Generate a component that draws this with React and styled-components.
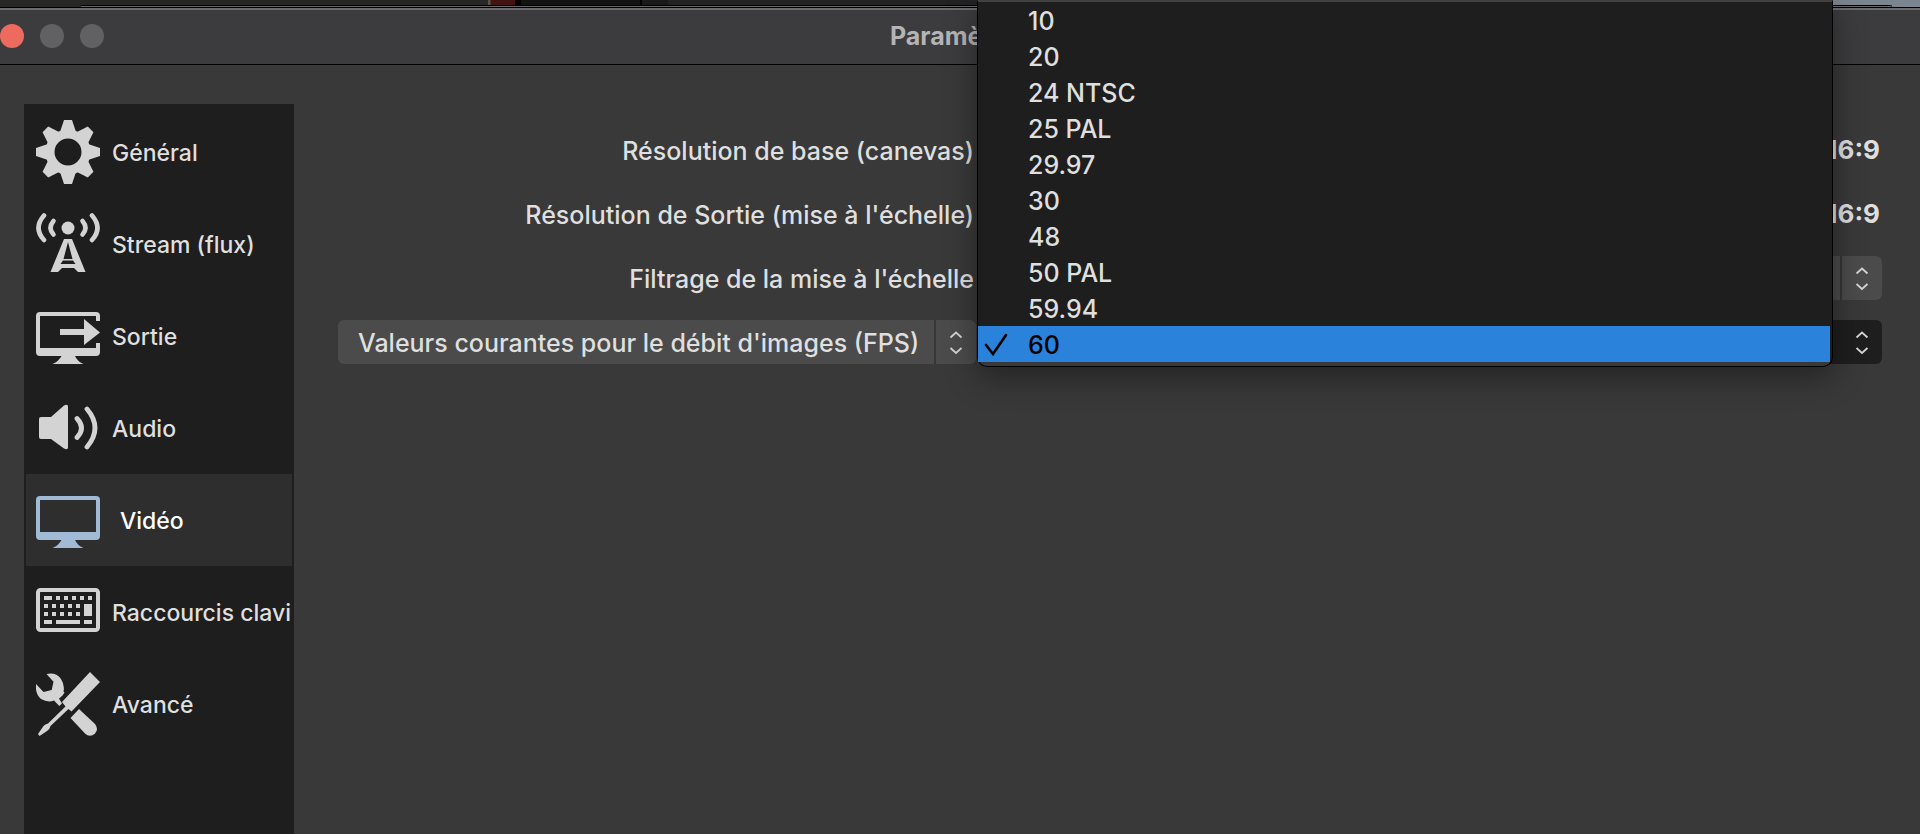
import React from 'react'
import styled, { createGlobalStyle } from 'styled-components'

const GlobalStyle = createGlobalStyle`
  * {
    box-sizing: border-box;
  }
  body {
    margin: 0;
    background: #393939;
    color: #dfdfdf;
    font-family: Inter, "Liberation Sans", sans-serif;
    font-size: 25px;
    font-weight: 500;
    line-height: 36px;
    overflow: hidden;
  }
`

const navItems = [
  { name: 'Général', icon: 'gear' },
  { name: 'Stream (flux)', icon: 'antenna' },
  { name: 'Sortie', icon: 'output' },
  { name: 'Audio', icon: 'audio' },
  { name: 'Vidéo', icon: 'video', active: true },
  { name: 'Raccourcis clavi', icon: 'keyboard' },
  { name: 'Avancé', icon: 'tools' },
]

const fpsValues = ['10', '20', '24 NTSC', '25 PAL', '29.97', '30', '48', '50 PAL', '59.94', '60']

// x, y, width of each small key
const keys = [
  [8, 8, 8], [20, 8, 4], [28, 8, 4], [36, 8, 4], [44, 8, 4], [52, 8, 4],
  [8, 16, 4], [16, 16, 4], [24, 16, 4], [32, 16, 4], [40, 16, 4],
  [8, 24, 4], [16, 24, 4], [24, 24, 4], [32, 24, 4], [40, 24, 4],
  [8, 32, 8], [20, 32, 24], [48, 32, 8],
]

const tooth = 'M28 0h8l4 12h-16z'

const icons = {
  gear: (
    <>
      <circle cx="32" cy="32" r="18" fill="none" stroke="currentColor" strokeWidth="9" />
      {[0, 45, 90, 135, 180, 225, 270, 315].map((a) => (
        <path key={a} d={tooth} transform={`rotate(${a} 32 32)`} />
      ))}
    </>
  ),
  antenna: (
    <>
      <circle cx="32" cy="16" r="6.5" />
      <g fill="none" stroke="currentColor" strokeWidth="4.6" strokeLinecap="round">
        <path d="M8 3.500Q-3 16 8 28M56 3.500Q67 16 56 28" />
        <path d="M17.500 9Q11.500 16 17.500 22.500M46.500 9Q52.500 16 46.500 22.500" />
      </g>
      <path fillRule="evenodd" d="M28 27h8l13.500 33H42l-4-4H26l-4 4h-7.500zM32 30l-4.500 17h9zM27 48.500l-2.500 3.500h15L37 48.500z" />
    </>
  ),
  output: (
    <g transform="translate(0 2)">
      <path d="M4 6h56a4 4 0 0 1 4 4v5h-4v-5H4v32h56v-5h4v9a4 4 0 0 1-4 4H39q2 5 8.500 8h-31q6.500-3 9-8H4a4 4 0 0 1-4-4V10a4 4 0 0 1 4-4z" />
      <path d="M24 23h24V13l16 13.500L48 39V29H24z" />
    </g>
  ),
  audio: (
    <>
      <path d="M5 21h10L28 9.500q4-2 4 1v41q0 3-4 1L15 43H5q-2 0-2-2V23q0-2 2-2z" />
      <g fill="none" stroke="currentColor" strokeWidth="4.800" strokeLinecap="round">
        <path d="M41 22.500Q50 32 41 41.500M51 13Q67 32 51 51" />
      </g>
    </>
  ),
  video: (
    <path
      fillRule="evenodd"
      transform="translate(0 2)"
      d="M4 6h56a4 4 0 0 1 4 4v36a4 4 0 0 1-4 4H39q2 5 8.500 8h-31q6.500-3 9-8H4a4 4 0 0 1-4-4V10a4 4 0 0 1 4-4zM4 10v32h56V10z"
    />
  ),
  keyboard: (
    <g transform="translate(0 8)">
      <rect x="2" y="2" width="60" height="40" rx="2.500" fill="none" stroke="currentColor" strokeWidth="4" />
      {keys.map(([x, y, w]) => (
        <rect key={`${x}-${y}`} x={x} y={y} width={w} height="4" />
      ))}
      <rect x="48" y="16" width="8" height="12" />
    </g>
  ),
  tools: (
    <>
      <path d="M10.500 2Q20 0 25 7Q29 13 27.500 19.500L28.500 20.500L26.500 23.500Q24.500 25.500 23 26.500L26 31.500L23.300 34L18 28.500Q12 31 5 27Q-1 22 0 12L7.500 20L15.700 18L17.500 9.700Z" />
      <path d="M54 0L64 10L35.500 39.500L32.500 37L14.500 54Q14 57 11 59L3.500 64L2 62L7.500 54Q9 52 12 51.500L29.500 34.500L26 30Z" />
      <path d="M43 37l16 15q4 5 0 9.500-5 4.500-10 0L34.500 46z" />
    </>
  ),
}

const Page = styled.div`
  min-height: 100vh;
  display: flex;
  flex-direction: column;
`

const Backdrop = styled.div`
  height: 8px;
  padding: 5px 28px 0 80px;
  background: linear-gradient(90deg, #272726 488px, #5b5148 488px 490px, #421311 491px 515px, #030303 515px 521px, #131313 521px 640px, #000 640px 642px, #191919 642px 668px, #222 668px 1400px, #7b858f 1800px);
  border-bottom: 1px solid #000;
`

const BackWindow = styled.div`
  height: 2px;
  border: 1px solid #000;
  border-bottom: 1px solid #68686a;
  border-radius: 8px 8px 0 0;
`

const TitleBar = styled.header`
  height: 57px;
  display: grid;
  grid-template-columns: 1fr auto 1fr;
  align-items: center;
  padding-bottom: 2px;
  background: #3c3c3e;
  border-top: 2px solid #6c6c6e;
  border-bottom: 1px solid #000;
`

const Lights = styled.div`
  display: flex;
  gap: 16px;
`

const Light = styled.button`
  width: 24px;
  height: 24px;
  padding: 0;
  border: 0;
  border-radius: 50%;
  background: ${(p) => p.$color || '#616163'};
`

const Title = styled.h1`
  margin: 0;
  font-size: 25px;
  line-height: 36px;
  font-weight: 700;
  color: #b4b4b5;
`

const Content = styled.main`
  flex: 1;
  display: flex;
  gap: 44px;
  padding: 39px 38px 0 24px;
`

const Sidebar = styled.nav`
  width: 270px;
  flex-shrink: 0;
  padding: 2px;
  background: #1e1e1e;
`

const NavItem = styled.a`
  height: 92px;
  display: flex;
  align-items: center;
  gap: ${(p) => (p.$active ? 20 : 12)}px;
  padding-left: 10px;
  white-space: nowrap;
  font-size: 23px;
  text-decoration: none;
  color: ${(p) => (p.$active ? '#fff' : '#dfdfdf')};
  background: ${(p) => (p.$active ? '#2e2e2e' : 'transparent')};
`

const NavText = styled.span`
  padding-top: 2px;
`

const NavIcon = styled.svg`
  width: 64px;
  height: 64px;
  flex-shrink: 0;
  fill: currentColor;
  color: ${(p) => (p.$active ? '#a1bbd6' : '#d3d3d3')};
`

const Form = styled.form`
  flex: 1;
  display: grid;
  grid-template-columns: minmax(0, 638px) minmax(0, 1fr);
  grid-auto-rows: 44px;
  align-content: start;
  align-items: center;
  gap: 20px 2px;
  padding-top: 24px;
`

const Label = styled.label`
  padding: 2px 2px 0 0;
  text-align: right;
  white-space: nowrap;
`

const Field = styled.div`
  display: flex;
  align-items: center;
  gap: 16px;
`

const SizeInput = styled.input`
  flex: 1;
  min-width: 0;
  height: 44px;
  margin-right: 60px;
  border: 0;
  background: #1e1e1e;
`

const Ratio = styled.strong`
  padding-right: 2px;
  font-size: 26px;
  font-weight: 700;
`

const SelectBox = styled.div`
  height: 44px;
  display: grid;
  position: relative;
`

const Select = styled.select`
  grid-area: 1 / 1;
  width: 100%;
  padding: 2px 40px 0 20px;
  appearance: none;
  border: 0;
  border-radius: 6px;
  outline: 0;
  font: inherit;
  color: inherit;
  background: ${(p) => (p.$dark ? '#1e1e1e' : '#4b4b4b')};
`

const Arrows = styled.svg`
  grid-area: 1 / 1;
  justify-self: end;
  width: 42px;
  height: 44px;
  pointer-events: none;
  fill: none;
  stroke: #d3d3d3;
  stroke-width: 1.8;
  border-left: 2px solid ${(p) => (p.$dark ? 'transparent' : '#363636')};
`

const Popup = styled.ul`
  position: absolute;
  left: -1px;
  right: 49px;
  bottom: -3px;
  z-index: 1;
  margin: 0;
  padding: 0 2px 4px 0;
  list-style: none;
  background: linear-gradient(#1e1e1e, #1e1e1e) no-repeat 0 0 / 100% 360px, #393939;
  border: 1px solid #000;
  border-top: 2px solid #414141;
  border-radius: 0 0 10px 10px;
  box-shadow: 0 10px 32px rgba(0, 0, 0, 0.4);
`

const Option = styled.li`
  height: 36px;
  display: flex;
  align-items: center;
  padding-top: 2px;
  color: ${(p) => (p.$selected ? '#000' : '#dfdfdf')};
  background: ${(p) => (p.$selected ? '#2a82da' : 'transparent')};
`

const CheckSlot = styled.span`
  width: 50px;
  height: 36px;
  display: flex;
`

const Check = styled.svg`
  width: 36px;
  height: 36px;
  fill: none;
  stroke: #000;
  stroke-width: 2.6;
  stroke-linecap: round;
`

const ArrowGlyph = ({ dark }) => (
  <Arrows $dark={dark} viewBox="0 0 40 44" aria-hidden="true">
    <path d="M14.500 17.500l5.500-5 5.500 5M14.500 28l5.500 5 5.500-5" />
  </Arrows>
)

const App = () => {
  return (
    <Page>
      <GlobalStyle />
      <Backdrop>
        <BackWindow />
      </Backdrop>

      {/** title bar */}
      <TitleBar>
        <Lights>
          <Light $color="#ed6a5f" aria-label="Fermer" />
          <Light aria-label="Réduire" />
          <Light aria-label="Agrandir" />
        </Lights>
        <Title>Paramètres</Title>
      </TitleBar>

      <Content>
        {/** sections */}
        <Sidebar>
          {navItems.map((item) => (
            <NavItem key={item.name} href={`#${item.icon}`} $active={item.active}>
              <NavIcon viewBox="0 0 64 64" $active={item.active} aria-hidden="true">
                {icons[item.icon]}
              </NavIcon>
              <NavText>{item.name}</NavText>
            </NavItem>
          ))}
        </Sidebar>

        {/** video settings */}
        <Form>
          <Label htmlFor="base">Résolution de base (canevas)</Label>
          <Field>
            <SizeInput id="base" />
            <Ratio>16:9</Ratio>
          </Field>

          <Label htmlFor="output">Résolution de Sortie (mise à l'échelle)</Label>
          <Field>
            <SizeInput id="output" />
            <Ratio>16:9</Ratio>
          </Field>

          <Label htmlFor="filter">Filtrage de la mise à l'échelle</Label>
          <SelectBox>
            <Select id="filter" />
            <ArrowGlyph />
          </SelectBox>

          <SelectBox>
            <Select aria-label="Type de débit d'images">
              <option>Valeurs courantes pour le débit d'images (FPS)</option>
            </Select>
            <ArrowGlyph />
          </SelectBox>
          <SelectBox>
            <Select $dark aria-label="FPS" />
            <ArrowGlyph dark />
            <Popup role="listbox" aria-label="FPS">
              {fpsValues.map((value) => (
                <Option key={value} role="option" aria-selected={value === '60'} $selected={value === '60'}>
                  <CheckSlot>
                    {value === '60' && (
                      <Check viewBox="0 0 36 36" aria-hidden="true">
                        <path d="M8 18l7 9L28 8" />
                      </Check>
                    )}
                  </CheckSlot>
                  {value}
                </Option>
              ))}
            </Popup>
          </SelectBox>
        </Form>
      </Content>
    </Page>
  )
}

export default App
